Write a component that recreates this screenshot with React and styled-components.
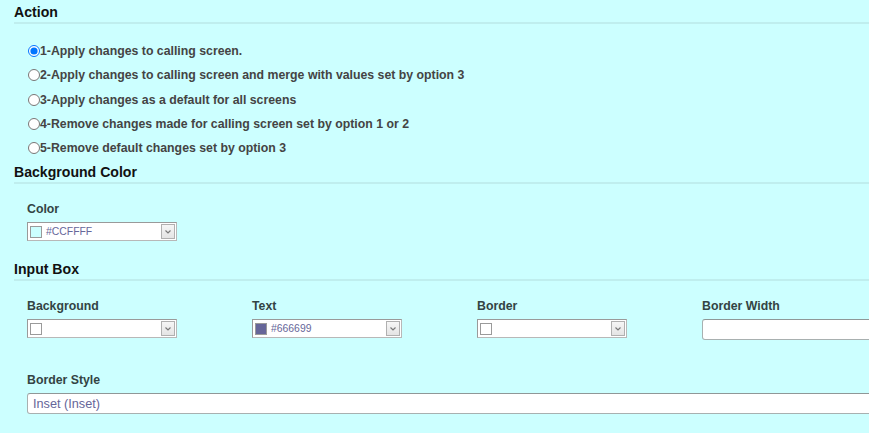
import React from "react";
import styled, { createGlobalStyle } from "styled-components";

const Global = createGlobalStyle`
  html, body { margin: 0; padding: 0; background: #ccffff; overflow: hidden; }
  body { font-family: "Liberation Sans", Arial, sans-serif; }
`;

const Page = styled.div`
  width: 960px;
  padding-left: 14px;
  box-sizing: border-box;
`;

const Heading = styled.h2`
  margin: 0;
  padding: 4px 0 1px;
  font-size: 14.1px;
  line-height: 17px;
  font-weight: bold;
  color: #111;
  border-bottom: 2px solid #bfeeee;
`;

const RadioGroup = styled.div`
  padding: 15px 0 0 13px;
`;

const RadioRow = styled.label`
  display: flex;
  align-items: center;
  height: 24.3px;
  font-size: 12.3px;
  font-weight: bold;
  color: #444;
`;

const Radio = styled.input`
  margin: 0 0 0 1px;
  width: 12px;
  height: 12px;
`;

const Fields = styled.div`
  display: grid;
  grid-template-columns: repeat(4, 225px);
  column-gap: 0;
  row-gap: 32px;
  padding: ${(p) => p.$top}px 0 ${(p) => p.$bottom}px 13px;
`;

const Field = styled.div`
  display: flex;
  flex-direction: column;
  grid-column: ${(p) => (p.$wide ? "1 / -1" : "auto")};
`;

const Label = styled.div`
  font-size: 12.3px;
  line-height: 15px;
  padding-top: 1px;
  font-weight: bold;
  color: #334444;
  margin-bottom: 5px;
`;

const ColorSelect = styled.div`
  width: 150px;
  height: 19px;
  box-sizing: border-box;
  display: flex;
  align-items: center;
  background: #fff;
  border: 1px solid #9a9a9a;
  border-bottom-color: #b8b8b8;
  border-right-color: #b8b8b8;
  padding-left: 2px;
`;

const Swatch = styled.span`
  width: 12px;
  height: 12px;
  box-sizing: border-box;
  border: 1px solid #9a9a9a;
  background: ${(p) => p.$color};
  flex: none;
`;

const SelectText = styled.span`
  flex: 1;
  margin-left: 4px;
  font-size: 10.4px;
  color: #666699;
`;

const DropButton = styled.span`
  width: 14px;
  height: 15px;
  box-sizing: border-box;
  margin-right: 1px;
  border: 1px solid #b0b0b0;
  background: linear-gradient(#f6f6f6, #e4e4e4);
  display: flex;
  align-items: center;
  justify-content: center;
`;

const TextInput = styled.div`
  height: 21px;
  box-sizing: border-box;
  width: ${(p) => p.$width}px;
  background: #fff;
  border: 1px solid #a8b0b0;
  border-top-color: #8f9797;
  border-radius: 3px;
  display: flex;
  align-items: center;
  padding-left: 5px;
  font-size: 12.7px;
  color: #666699;
`;

function Chevron() {
  return (
    <svg width="8" height="6" viewBox="0 0 8 6">
      <path d="M1.5 1.5 L4 4 L6.5 1.5" fill="none" stroke="#7a7a7a" strokeWidth="1.2" />
    </svg>
  );
}

function ColorPicker({ color, value }) {
  return (
    <ColorSelect>
      <Swatch $color={color} />
      <SelectText>{value}</SelectText>
      <DropButton>
        <Chevron />
      </DropButton>
    </ColorSelect>
  );
}

const options = [
  "1-Apply changes to calling screen.",
  "2-Apply changes to calling screen and merge with values set by option 3",
  "3-Apply changes as a default for all screens",
  "4-Remove changes made for calling screen set by option 1 or 2",
  "5-Remove default changes set by option 3",
];

export default function App() {
  return (
    <Page>
      <Global />
      <Heading>Action</Heading>
      <RadioGroup>
        {options.map((o, i) => (
          <RadioRow key={o}>
            <Radio type="radio" name="action" defaultChecked={i === 0} />
            {o}
          </RadioRow>
        ))}
      </RadioGroup>
      <Heading>Background Color</Heading>
      <Fields $top={17} $bottom={16}>
        <Field>
          <Label>Color</Label>
          <ColorPicker color="#ccffff" value="#CCFFFF" />
        </Field>
      </Fields>
      <Heading>Input Box</Heading>
      <Fields $top={17} $bottom={20}>
        <Field>
          <Label>Background</Label>
          <ColorPicker color="#ffffff" value="" />
        </Field>
        <Field>
          <Label>Text</Label>
          <ColorPicker color="#666699" value="#666699" />
        </Field>
        <Field>
          <Label>Border</Label>
          <ColorPicker color="#ffffff" value="" />
        </Field>
        <Field>
          <Label>Border Width</Label>
          <TextInput $width={222} />
        </Field>
        <Field $wide>
          <Label>Border Style</Label>
          <TextInput $width={897}>Inset (Inset)</TextInput>
        </Field>
      </Fields>
    </Page>
  );
}
